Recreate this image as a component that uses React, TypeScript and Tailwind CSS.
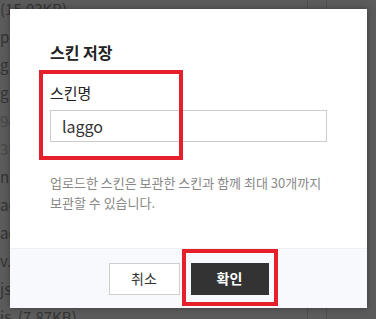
const rows = [
  "(15.03KB)",
  "pg",
  "g",
  "g",
  "94",
  "3K",
  "ng",
  "ac",
  "ac",
  "v.t",
  "js",
  "is  (7.87KB)",
];

function BackgroundList() {
  return (
    <div className="flex h-full">
      <div className="-mt-[2px] flex flex-1 flex-col">
        {rows.map((r, i) => (
          <div
            key={i}
            className={`h-[28px] shrink-0 whitespace-pre text-[15px] leading-[22px] ${i === 4 || i === 5 ? "text-[#474747]" : "text-[#333333]"}`}
          >
            {r}
          </div>
        ))}
      </div>
      <div className="w-[19px] border-l border-[#4e4e4e]" />
      <div className="w-[50px] border-l border-[#4e4e4e]" />
    </div>
  );
}

function SaveSkinModal() {
  return (
    <div className="absolute left-[10px] top-[9px] flex h-[299px] w-[357px] flex-col bg-white shadow-[0_0_6px_rgba(0,0,0,0.35)]">
      <div className="relative flex-1 px-[40px] pt-[32px]">
        <h2 className="text-[16px] font-bold leading-[23px] text-[#222]">스킨 저장</h2>
        <label className="mt-[18px] block text-[15px] leading-[21px] text-[#222]">스킨명</label>
        <input
          className="mt-[7px] block h-[32px] w-[277px] border border-[#cccccc] px-[11px] text-[16px] text-[#333] outline-none"
          defaultValue="laggo"
        />
        <p className="mt-[31px] text-[13px] leading-[20px] text-[#888]">
          업로드한 스킨은 보관한 스킨과 함께 최대 30개까지
          <br />
          보관할 수 있습니다.
        </p>
        <div className="pointer-events-none absolute left-[29px] top-[61px] h-[90px] w-[144px] border-[4px] border-[#e5202a]" />
      </div>
      <div className="relative flex h-[60px] items-center justify-center gap-[11px] border-t border-[#eef0f3] bg-[#f8f9fc]">
        <button className="h-[32px] w-[71px] border border-[#cfcfcf] bg-white text-[14px] text-[#333]">
          취소
        </button>
        <button className="h-[32px] w-[78px] bg-[#333333] text-[14px] font-bold text-white">
          확인
        </button>
        <div className="pointer-events-none absolute left-[172px] top-[0px] h-[57px] w-[96px] border-[4px] border-[#e5202a]" />
      </div>
    </div>
  );
}

export default function App() {
  return (
    <div
      className="relative h-[319px] w-[376px] overflow-hidden bg-[#5b5b5b]"
      style={{ fontFamily: '"Noto Sans CJK KR", "Noto Sans", sans-serif' }}
    >
      <BackgroundList />
      <SaveSkinModal />
    </div>
  );
}
